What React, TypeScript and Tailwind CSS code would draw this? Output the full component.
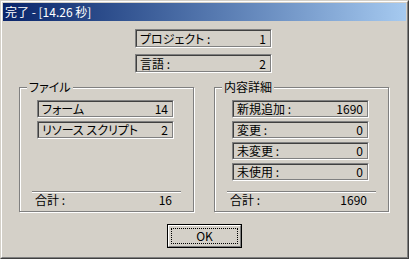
import React from "react";

function Field({ label, value, h }: { label: string; value: string; h: string }) {
  return (
    <div className={`w-[137px] ${h} border border-t-[#808080] border-l-[#808080] border-r-white border-b-white`}>
      <div className="w-full h-full border border-t-[#404040] border-l-[#404040] border-r-[#808080] border-b-[#808080] flex items-center justify-between pl-[3px] pr-[4px]">
        <span>{label}</span>
        <span>{value}</span>
      </div>
    </div>
  );
}

function Group({ title, children, total }: { title: string; children: React.ReactNode; total: string }) {
  return (
    <div className="relative w-[175px] h-[125px] border border-[#808080] shadow-[inset_1px_1px_0_#fff,1px_1px_0_#fff] flex flex-col">
      <div className="absolute left-[7px] top-[-8px] px-[2px] bg-[#d4d0c8] leading-[14px]">{title}</div>
      <div className="flex flex-col gap-[3px] pt-[12px] pl-[17px]">{children}</div>
      <div className="flex-1" />
      <div className="ml-[12px] mr-[12px] border-t border-t-[#808080] border-b border-b-white" />
      <div className="ml-[12px] mr-[12px] h-[14px] leading-[14px] flex justify-between pl-[3px] pr-[9px] mb-[4px]">
        <span>合計 :</span>
        <span>{total}</span>
      </div>
    </div>
  );
}

export default function App() {
  return (
    <div className="w-[409px] h-[259px] bg-[#d4d0c8] border border-t-[#d4d0c8] border-l-[#d4d0c8] border-r-[#404040] border-b-[#404040] font-['Noto_Sans_CJK_JP',sans-serif] text-[12px] text-black [font-feature-settings:'palt']">
      <div className="h-full border border-t-white border-l-white border-r-[#808080] border-b-[#808080] p-px flex flex-col">
        <div className="h-[18px] shrink-0 bg-linear-to-r from-[#0a246a] to-[#a6caf0] text-white flex items-center pl-[2px] leading-[18px]">
          完了 - [14.26 秒]
        </div>
        <div className="flex flex-col">
          <div className="flex flex-col items-center gap-[6px] pt-[8px] pr-[2px]">
            <Field label="プロジェクト :" value="1" h="h-[19px]" />
            <Field label="言語 :" value="2" h="h-[19px]" />
          </div>
          <div className="flex gap-[20px] pl-[16px] mt-[14px]">
            <Group title="ファイル" total="16">
              <Field label="フォーム" value="14" h="h-[18px]" />
              <Field label="リソース スクリプト" value="2" h="h-[18px]" />
            </Group>
            <Group title="内容詳細" total="1690">
              <Field label="新規追加 :" value="1690" h="h-[18px]" />
              <Field label="変更 :" value="0" h="h-[18px]" />
              <Field label="未変更 :" value="0" h="h-[18px]" />
              <Field label="未使用 :" value="0" h="h-[18px]" />
            </Group>
          </div>
          <div className="flex justify-center mt-[12px]">
            <button className="w-[75px] h-[24px] border border-black p-0 bg-[#d4d0c8]">
              <div className="relative w-full h-full border border-t-white border-l-white border-r-[#808080] border-b-[#808080] flex items-center justify-center leading-[14px]">
                <div className="absolute inset-[2px] border border-dotted border-black" />
                OK
              </div>
            </button>
          </div>
        </div>
      </div>
    </div>
  );
}
